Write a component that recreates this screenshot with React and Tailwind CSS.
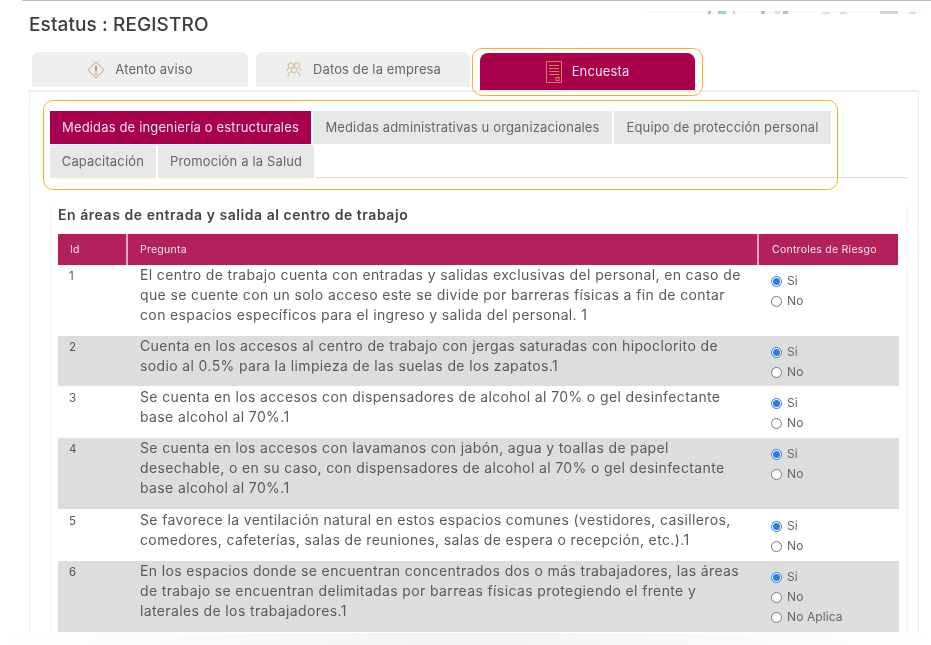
import React from 'react';

const filas = [
  { id: 1, h: 'h-[70px]', lineas: ['El centro de trabajo cuenta con entradas y salidas exclusivas del personal, en caso de', 'que se cuente con un solo acceso este se divide por barreras físicas a fin de contar', 'con espacios específicos para el ingreso y salida del personal. 1'] },
  { id: 2, h: 'h-[50px]', lineas: ['Cuenta en los accesos al centro de trabajo con jergas saturadas con hipoclorito de', 'sodio al 0.5% para la limpieza de las suelas de los zapatos.1'] },
  { id: 3, h: 'h-[50px]', lineas: ['Se cuenta en los accesos con dispensadores de alcohol al 70% o gel desinfectante', 'base alcohol al 70%.1'] },
  { id: 4, h: 'h-[71px]', lineas: ['Se cuenta en los accesos con lavamanos con jabón, agua y toallas de papel', 'desechable, o en su caso, con dispensadores de alcohol al 70% o gel desinfectante', 'base alcohol al 70%.1'] },
  { id: 5, h: 'h-[50px]', lineas: ['Se favorece la ventilación natural en estos espacios comunes (vestidores, casilleros,', 'comedores, cafeterías, salas de reuniones, salas de espera o recepción, etc.).1'] },
  { id: 6, h: 'h-[71px]', noAplica: true, lineas: ['En los espacios donde se encuentran concentrados dos o más trabajadores, las áreas', 'de trabajo se encuentran delimitadas por barreas físicas protegiendo el frente y', 'laterales de los trabajadores.1'] },
];

const IconoAviso = () => (
  <svg width="18" height="18" viewBox="0 0 18 18" fill="none" stroke="#d6c09c" strokeWidth="1.2">
    <path d="M9 1 L17 9 L9 17 L1 9 Z" strokeLinejoin="round" />
    <path d="M9 5 V10.5" strokeWidth="1.8" stroke="#a88f68" />
    <circle cx="9" cy="12.8" r="0.9" fill="#a88f68" stroke="none" />
  </svg>
);

const IconoEmpresa = () => (
  <svg width="18" height="18" viewBox="0 0 18 18" fill="none" stroke="#dcc4a0" strokeWidth="1.1">
    <circle cx="6" cy="4.5" r="2.6" />
    <circle cx="12" cy="4.5" r="2.6" />
    <circle cx="9" cy="9" r="2.6" />
    <path d="M3 16 C3 12 5 11 6.5 11 M15 16 C15 12 13 11 11.5 11 M2 10 C2 8.5 3 7.5 4 7.5 M16 10 C16 8.5 15 7.5 14 7.5" />
  </svg>
);

const IconoEncuesta = () => (
  <svg width="16" height="22" viewBox="0 0 16 22" fill="none" stroke="#d0834f" strokeWidth="1">
    <rect x="0.5" y="0.5" width="15" height="21" />
    <path d="M3 4.5 H13 M3 7.5 H13 M3 10.5 H13 M3 13.5 H13" />
    <rect x="10" y="16.5" width="3" height="3" />
  </svg>
);

const Radio = ({ marcado, texto }) => (
  <div className="flex items-center gap-[5px] h-5">
    {marcado ? (
      <span className="w-[11px] h-[11px] rounded-full border border-[#2f7de1] bg-white flex items-center justify-center">
        <span className="w-[7px] h-[7px] rounded-full bg-[#2f7de1]" />
      </span>
    ) : (
      <span className="w-[11px] h-[11px] rounded-full border border-[#777] bg-white" />
    )}
    <span className="text-[12px] tracking-[0.1px] text-[#666]">{texto}</span>
  </div>
);

const TabPrincipal = ({ icono, texto, activo, ancho }) => (
  <div className={activo
    ? `${ancho} h-[37px] mt-px rounded-t-[8px] bg-[#a8004c] flex items-center justify-center gap-[10px] text-[#f4e4ea]`
    : `${ancho} h-[35px] rounded-t-[8px] bg-[#eeeeee] flex items-center justify-center gap-[10px] text-[#666]`}>
    {icono}
    <span className="text-[13px] tracking-[0.12px]">{texto}</span>
  </div>
);

const SubTab = ({ texto, activo, ancho }) => (
  <div className={`${ancho} h-[33px] flex items-center justify-center text-[13px] tracking-[0.15px] ${activo ? 'bg-[#a8004c] text-[#f4e4ea]' : 'bg-[#e7e8e6] text-[#666]'}`}>
    {texto}
  </div>
);

export default function App() {
  return (
    <div className="relative w-[931px] h-[645px] overflow-hidden bg-white blur-[0.4px] font-['Inter','Liberation_Sans',sans-serif]">
      <div className="h-px ml-[22px] bg-[#bbbbbb]" />

      {/* iconos cortados de la barra superior */}
      <div className="absolute left-[645px] top-[11px] w-[280px] h-[3px] bg-[#fbfbfb] flex items-center pl-[63px]">
        <span className="w-[3px] h-[3px] bg-[#bbbbbb]" />
        <span className="w-[8px] h-[3px] ml-[7px] bg-[#8fdcb8]" />
        <span className="w-[2px] h-[3px] ml-[7px] bg-[#cccccc]" />
        <span className="w-[4px] h-[3px] ml-[26px] bg-[#bbbbbb]" />
        <span className="w-[5px] h-[3px] ml-[10px] bg-[#c4ecd9]" />
        <span className="w-[5px] h-[3px] ml-[3px] bg-[#bbbbbb]" />
        <span className="w-[7px] h-[2px] ml-[35px] bg-[#dddddd]" />
        <span className="w-[7px] h-[2px] ml-[10px] bg-[#dddddd]" />
        <span className="w-[18px] h-[3px] ml-[33px] bg-[#d4d4d4]" />
        <span className="w-[7px] h-[2px] ml-[11px] bg-[#dddddd]" />
      </div>

      <h1 className="ml-[29px] mt-[13px] h-[22px] leading-[22px] text-[19px] font-medium tracking-[0.1px] text-[#3d3d3d]">Estatus : REGISTRO</h1>

      <div className="ml-[32px] mt-[16px] flex items-start">
        <TabPrincipal ancho="w-[216px]" icono={<IconoAviso />} texto="Atento aviso" />
        <div className="w-2" />
        <TabPrincipal ancho="w-[214px]" icono={<IconoEmpresa />} texto="Datos de la empresa" />
        <div className="w-[10px]" />
        <TabPrincipal ancho="w-[215px]" activo icono={<IconoEncuesta />} texto="Encuesta" />
      </div>

      <div className="ml-[29px] mr-[12px] border-t-2 border-l border-r border-[#eeeeee] pl-[20px] pr-[10px] pt-[19px]">
        <div className="flex gap-[2px]">
          <SubTab ancho="w-[261px]" activo texto="Medidas de ingeniería o estructurales" />
          <SubTab ancho="w-[299px]" texto="Medidas administrativas u organizacionales" />
          <SubTab ancho="w-[217px]" texto="Equipo de protección personal" />
        </div>
        <div className="flex gap-[2px] mt-px">
          <SubTab ancho="w-[106px]" texto="Capacitación" />
          <SubTab ancho="w-[157px]" texto="Promoción a la Salud" />
          <div className="w-[593px] border-b border-[#dddddd]" />
        </div>

        <div className="w-[858px] border-x border-[#f2f2f2] pl-[7px] pr-[9px]">
          <h2 className="mt-[28px] h-[18px] leading-[18px] text-[14px] font-semibold tracking-[0.55px] text-[#444]">En áreas de entrada y salida al centro de trabajo</h2>

          <div className="mt-[10px] flex h-[31px] w-[840px] bg-[#b3205a] text-[#f6e6ec] text-[10.5px] tracking-[0.25px]">
            <div className="w-[70px] flex items-center pl-[12px] border-r-2 border-[#e0a8bd]">Id</div>
            <div className="w-[631px] flex items-center pl-[12px] border-r-2 border-[#e0a8bd]">Pregunta</div>
            <div className="flex-1 flex items-center pl-[13px]">Controles de Riesgo</div>
          </div>

          {filas.map((fila, i) => (
            <div key={fila.id} className={`${fila.h} w-[841px] mb-px flex ${i % 2 === 1 ? 'bg-[#dcdddc]' : 'bg-white'}`}>
              <div className="w-[82px] pl-[11px] pt-[1px] text-[11.5px] leading-[20px] text-[#555]">{fila.id}</div>
              <div className="w-[631px] text-[14px] tracking-[0.37px] leading-[20px] text-[#5a5a5a]">
                {fila.lineas.map((linea) => (
                  <div key={linea} className="whitespace-nowrap">{linea}</div>
                ))}
              </div>
              <div className="pt-[6px]">
                <Radio marcado texto="Si" />
                <Radio texto="No" />
                {fila.noAplica && <Radio texto="No Aplica" />}
              </div>
            </div>
          ))}
        </div>
      </div>

      <div className="h-[13px] bg-gradient-to-r from-white via-[#f2f2f2] to-white" />

      {/* recuadros naranjas de la anotación */}
      <div className="absolute left-[472px] top-[48px] w-[231px] h-[48px] rounded-[10px] border-[1.5px] border-[#fbb024]" />
      <div className="absolute left-[43px] top-[100px] w-[795px] h-[90px] rounded-[10px] border-[1.5px] border-[#fbb024]" />
    </div>
  );
}
